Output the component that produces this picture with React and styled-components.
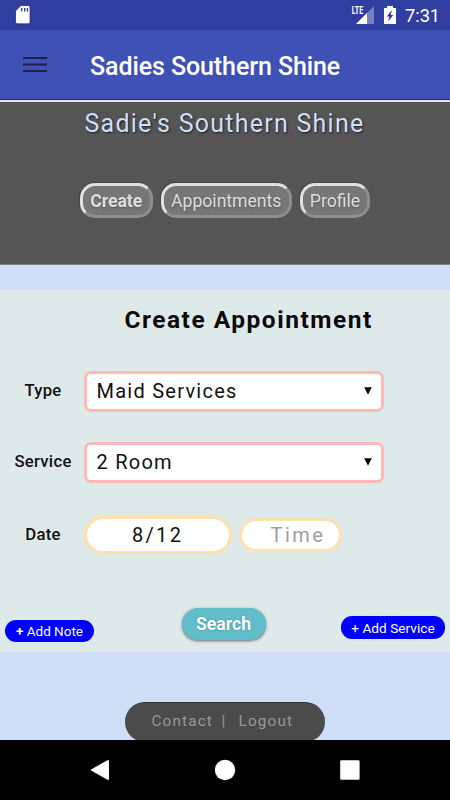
import React from "react";
import styled, { createGlobalStyle } from "styled-components";

const Global = createGlobalStyle`
  * { box-sizing: border-box; }
  body { margin: 0; overflow: hidden; font-family: Roboto, sans-serif; }
  button, input { font-family: inherit; margin: 0; padding: 0; }
`;

const Screen = styled.div`
  width: 450px;
  height: 800px;
  overflow: hidden;
  display: flex;
  flex-direction: column;
  background: #cfdef7;
`;

const StatusBar = styled.div`
  height: 30px;
  flex: none;
  background: #303f9f;
  display: flex;
  align-items: flex-start;
  justify-content: space-between;
  svg { display: block; }
`;

const SdIcon = styled.svg`
  margin: 4px 0 0 14px;
`;

const StatusRight = styled.div`
  display: flex;
`;

const Clock = styled.span`
  width: 45px;
  height: 30px;
  font-size: 18.2px;
  line-height: 31px;
  color: #fff;
  white-space: nowrap;
`;

const AppBar = styled.header`
  height: 70px;
  flex: none;
  background: #3f51b5;
  border-bottom: 1px solid #0b2a9c;
  display: flex;
  padding-left: 23px;
`;

const MenuButton = styled.button`
  width: 67px;
  height: 69px;
  border: 0;
  background: none;
  svg { display: block; }
`;

const AppTitle = styled.h1`
  margin: 0;
  font-size: 25px;
  font-weight: 500;
  line-height: 74px;
  letter-spacing: -0.09px;
  color: #fff;
  white-space: nowrap;
`;

const Hero = styled.section`
  height: 165px;
  flex: none;
  background: #555;
  border-top: 2px solid #dbe9f4;
  border-bottom: 1px solid #7d8083;
  display: flex;
  flex-direction: column;
  align-items: center;
`;

const HeroTitle = styled.h2`
  margin: 5px 0 0;
  font-size: 25px;
  font-weight: 400;
  line-height: 34px;
  height: 76px;
  letter-spacing: 1.25px;
  padding-right: 1px;
  color: #cfdff8;
  text-shadow: 1px 1px 2px #222;
  white-space: nowrap;
`;

const Tabs = styled.nav`
  display: flex;
  gap: 8.5px;
`;

const Tab = styled.button`
  width: ${(p) => p.$width}px;
  height: 35px;
  border: 3px solid;
  border-color: #e0e0e0 #8f8f8f #8f8f8f #e0e0e0;
  border-radius: 15px;
  background: #777;
  color: #ddd;
  font-size: 17.6px;
  line-height: 28px;
  font-weight: ${(p) => (p.$active ? 700 : 400)};
  text-shadow: 0 1px 2px #555;
  box-shadow: -1px -1px 1px #484848;
  white-space: nowrap;
`;

const Panel = styled.main`
  margin-top: 25px;
  height: 362px;
  flex: none;
  background: #deeaea;
  display: flex;
  flex-direction: column;
`;

const PanelTitle = styled.h2`
  margin: 12px 0 0 124.5px;
  height: 69px;
  font-size: 24.5px;
  font-weight: 700;
  line-height: 36px;
  letter-spacing: 1.5px;
  color: #0a0a0a;
  white-space: nowrap;
`;

const Row = styled.div`
  height: 41px;
  margin-bottom: ${(p) => p.$gap}px;
  display: flex;
`;

const Label = styled.label`
  width: 84px;
  padding-left: 2px;
  text-align: center;
  font-size: 16.7px;
  font-weight: 500;
  line-height: 40px;
  letter-spacing: 0.28px;
  color: #111;
  white-space: nowrap;
`;

const Select = styled.div`
  width: 300px;
  height: 41px;
  border: 3px solid #ffb8b8;
  border-radius: 7px;
  background: #fff;
  display: flex;
  align-items: flex-start;
  justify-content: space-between;
  padding: 0 9px 0 9.5px;
  font-size: 20px;
  line-height: 35px;
  letter-spacing: 1.25px;
  color: #111;
  white-space: nowrap;
  svg { display: block; margin-top: 13px; }
`;

const Field = styled.div`
  width: ${(p) => p.$width}px;
  height: ${(p) => p.$height}px;
  margin: ${(p) => p.$top}px 7.5px 0 0;
  padding-left: ${(p) => p.$indent}px;
  border: 3px solid #ffe0af;
  border-radius: 20px;
  background: #fff;
  font-size: 20px;
  line-height: ${(p) => p.$height - 6}px;
  letter-spacing: ${(p) => p.$spacing}px;
  color: ${(p) => (p.$empty ? "#9c9c9c" : "#111")};
  white-space: nowrap;
`;

const Actions = styled.div`
  display: flex;
  align-items: flex-start;
  justify-content: space-between;
  padding: 0 5px;
`;

const AddButton = styled.button`
  width: ${(p) => p.$width}px;
  height: ${(p) => p.$height}px;
  margin-top: ${(p) => p.$top}px;
  border: 0;
  border-radius: 11px;
  background: #0000fe;
  color: #fff;
  font-size: ${(p) => p.$size}px;
  line-height: ${(p) => p.$line}px;
  white-space: nowrap;
`;

const SearchButton = styled.button`
  width: 84px;
  height: 32px;
  margin-left: 12px;
  border: 0;
  border-radius: 16px;
  background: #62bdcb;
  box-shadow: 0 1px 3px #666;
  color: #fff;
  font-size: 17.6px;
  font-weight: 700;
  line-height: 31px;
  text-shadow: 0 0 2px #3c8792;
`;

const FooterArea = styled.footer`
  height: 88px;
  flex: none;
  overflow: hidden;
  padding: 50px 0 0 125px;
`;

const FooterPill = styled.div`
  width: 200px;
  height: 40px;
  border-radius: 20px;
  border-top: 1px solid #373737;
  background: #4b4b4b;
  color: #999;
  display: flex;
  padding-left: 26.5px;
  font-size: 15.3px;
  line-height: 36px;
  letter-spacing: 1.15px;
  white-space: nowrap;
`;

const FooterItem = styled.span`
  width: ${(p) => p.$width}px;
`;

const SystemNav = styled.nav`
  height: 60px;
  flex: none;
  background: #000;
  svg { display: block; }
`;

const Caret = () => (
  <svg width="8" height="8" viewBox="0 0 8 8">
    <path d="M0.2 0.3H7.8L4 7.8Z" fill="#000" />
  </svg>
);

export default function App() {
  return (
    <>
      <Global />
      <Screen>
        <StatusBar>
          <SdIcon width="18" height="22" viewBox="0 0 18 22">
            <path
              d="M7 1.5H14.5Q16 1.5 16 3V18Q16 19.8 14.5 19.8H3Q1.5 19.8 1.5 18V7Z"
              fill="#fff"
              stroke="#1a2384"
              strokeWidth="0.7"
            />
            <path d="M7.7 4V7.5M10.7 4V7.5M13.4 4V7.5" stroke="#27359a" strokeWidth="1.3" />
          </SdIcon>
          <StatusRight>
            <svg width="55" height="30" viewBox="0 0 55 30">
              <path d="M24 6V24H6Z" fill="#7681bf" />
              <path d="M17 13V24H6Z" fill="#fff" />
              <text x="1.7" y="14" fontFamily="Roboto" fontSize="10.5" fontWeight="700" fill="#fff" textLength="11.5" lengthAdjust="spacingAndGlyphs">LTE</text>
              <path d="M37 6H43V8H46V24H34V8H37Z" fill="#fff" />
              <path d="M42 10L36.7 16.5H39.5L38 21.5L43.3 15H40.5Z" fill="#27348f" />
            </svg>
            <Clock>7:31</Clock>
          </StatusRight>
        </StatusBar>
        <AppBar>
          <MenuButton aria-label="Menu">
            <svg width="24" height="69" viewBox="0 0 24 69">
              <path d="M0 28H24M0 34.5H24M0 41H24" stroke="#1d2145" strokeWidth="2.2" />
            </svg>
          </MenuButton>
          <AppTitle>Sadies Southern Shine</AppTitle>
        </AppBar>
        <Hero>
          <HeroTitle>Sadie's Southern Shine</HeroTitle>
          <Tabs>
            <Tab $width={72.5} $active>Create</Tab>
            <Tab $width={130.5}>Appointments</Tab>
            <Tab $width={70}>Profile</Tab>
          </Tabs>
        </Hero>
        <Panel>
          <PanelTitle>Create Appointment</PanelTitle>
          <Row $gap={30}>
            <Label>Type</Label>
            <Select>Maid Services<Caret /></Select>
          </Row>
          <Row $gap={32}>
            <Label>Service</Label>
            <Select>2 Room<Caret /></Select>
          </Row>
          <Row $gap={52}>
            <Label>Date</Label>
            <Field $width={147.5} $height={38.5} $top={0.7} $indent={45} $spacing={2.3}>8/12</Field>
            <Field $width={103} $height={34} $top={2.5} $indent={28.5} $spacing={2.5} $empty>Time</Field>
          </Row>
          <Actions>
            <AddButton $width={89} $height={22} $top={11.6} $size={13.5} $line={22}><b>+</b> Add Note</AddButton>
            <SearchButton>Search</SearchButton>
            <AddButton $width={104} $height={23} $top={8} $size={13.7} $line={25}>+ Add Service</AddButton>
          </Actions>
        </Panel>
        <FooterArea>
          <FooterPill>
            <FooterItem $width={70}>Contact</FooterItem>
            <FooterItem $width={17}>|</FooterItem>
            <FooterItem $width={60}>Logout</FooterItem>
          </FooterPill>
        </FooterArea>
        <SystemNav>
          <svg width="450" height="60" viewBox="0 0 450 60">
            <path d="M92 30L108 21V39Z" fill="#fff" stroke="#fff" strokeWidth="2" strokeLinejoin="round" />
            <circle cx="225" cy="30" r="10.2" fill="#fff" />
            <rect x="340.2" y="20.3" width="19.4" height="19.4" rx="1.2" fill="#fff" />
          </svg>
        </SystemNav>
      </Screen>
    </>
  );
}
